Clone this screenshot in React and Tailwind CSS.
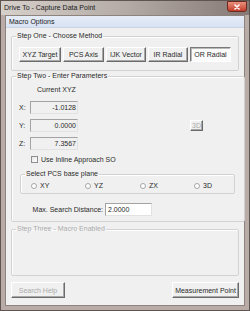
const font = { fontFamily: '"Liberation Sans", Arial, sans-serif' };

function Btn({ children, className = "", pressed, disabled }) {
  const base = pressed
    ? "border-t-[#7a7a7a] border-l-[#7a7a7a] border-r-white border-b-white bg-[#fbfbfb] shadow-[inset_1px_1px_0_#b8b8b8]"
    : "border-t-white border-l-white border-r-[#6b6b6b] border-b-[#6b6b6b] bg-[#f0f0f0] shadow-[inset_-1px_-1px_0_#a8a8a8]";
  return (
    <div
      className={`flex items-center justify-center border text-[7px] leading-none ${base} ${
        disabled ? "text-[#ababab]" : "text-[#2a2a2a]"
      } ${className}`}
    >
      {children}
    </div>
  );
}

function Field({ value, white, className = "" }) {
  return (
    <div
      className={`flex h-[13px] items-center border border-t-[#a3a3a3] border-l-[#a3a3a3] border-r-[#e2e2e2] border-b-[#e2e2e2] text-[7px] leading-none text-[#2a2a2a] ${
        white ? "bg-white pl-[2px]" : "justify-end bg-[#f0f0f0] pr-[1px]"
      } ${className}`}
    >
      {value}
    </div>
  );
}

function Group({ label, children, className = "", disabled }) {
  return (
    <fieldset className={`rounded-[2px] border border-[#d2d2d2] shadow-[inset_1px_1px_0_#ffffff] ${className}`}>
      <legend
        className={`ml-[4px] px-[1px] text-[7px] leading-[8px] ${disabled ? "text-[#ababab]" : "text-[#2a2a2a]"}`}
      >
        {label}
      </legend>
      {children}
    </fieldset>
  );
}

function Radio({ label }) {
  return (
    <div className="flex items-center gap-[3px]">
      <div className="h-[6px] w-[6px] rounded-full border border-[#a5a5a5] bg-white" />
      <span className="text-[7px] leading-none text-[#2a2a2a]">{label}</span>
    </div>
  );
}

export default function App() {
  return (
    <div
      className="flex h-[311px] w-[250px] flex-col border border-[#5e5450] bg-[#b9aca7] pb-[4px]"
      style={font}
    >
      <div className="flex h-[14px] items-start justify-between bg-gradient-to-r from-[#d6d0cb] via-[#b4aba6] to-[#857975] pl-[3px] pr-[2px]">
        <span className="mt-[3px] text-[7px] leading-none text-[#1a1a1a]">Drive To - Capture Data Point</span>
        <div className="flex h-[11px] w-[20px] items-center justify-center rounded-b-[3px] border border-[#6e2a20] bg-gradient-to-b from-[#e8907e] to-[#c23a28]">
          <svg width="6" height="6" viewBox="0 0 6 6">
            <path d="M1 1L5 5M5 1L1 5" stroke="white" strokeWidth="1.6" strokeLinecap="round" />
          </svg>
        </div>
      </div>
      <div className="mx-[4px] flex flex-1 flex-col border border-[#8d827d] bg-[#f0f0f0]">
        <div className="flex h-[12px] items-center border-b border-[#c9d4e4] bg-gradient-to-b from-[#e6edf8] to-[#d8e2f2] pl-[3px] text-[7px] leading-none text-[#1a1a1a]">
          Macro Options
        </div>
        <div className="flex flex-col px-[5px]">
          <Group label="Step One - Choose Method" className="mt-[4px]">
            <div className="flex gap-[2px] pb-[8px] pl-[7px] pt-[7px]">
              <Btn className="h-[15px] w-[42px]">XYZ Target</Btn>
              <Btn className="h-[15px] w-[41px]">PCS Axis</Btn>
              <Btn className="h-[15px] w-[40px]">IJK Vector</Btn>
              <Btn className="h-[15px] w-[40px]">IR Radial</Btn>
              <Btn className="h-[15px] w-[41px]" pressed>
                OR Radial
              </Btn>
            </div>
          </Group>
          <Group label="Step Two - Enter Parameters" className="mt-[1px]">
            <div className="flex flex-col pb-[5px]">
              <div className="mt-[6px] pl-[25px] text-[7px] leading-[8px] text-[#2a2a2a]">Current XYZ</div>
              <div className="mt-[7px] flex flex-col gap-[5px] pl-[7px]">
                <div className="flex items-center">
                  <span className="w-[11px] text-[7px] leading-none text-[#2a2a2a]">X:</span>
                  <Field value="-1.0128" className="w-[48px]" />
                </div>
                <div className="flex items-center">
                  <span className="w-[11px] text-[7px] leading-none text-[#2a2a2a]">Y:</span>
                  <Field value="0.0000" className="w-[48px]" />
                  <Btn className="ml-[112px] h-[11px] w-[13px]" disabled>
                    3D
                  </Btn>
                </div>
                <div className="flex items-center">
                  <span className="w-[11px] text-[7px] leading-none text-[#2a2a2a]">Z:</span>
                  <Field value="7.3567" className="w-[48px]" />
                </div>
              </div>
              <div className="mt-[6px] flex items-center gap-[3px] pl-[19px]">
                <div className="h-[7px] w-[7px] border border-[#8e8f8f] bg-gradient-to-br from-[#e6e6e6] to-white" />
                <span className="text-[7px] leading-none text-[#2a2a2a]">Use Inline Approach SO</span>
              </div>
              <Group label="Select PCS base plane" className="ml-[8px] mr-[9px] mt-[7px]">
                <div className="grid grid-cols-[54px_55px_54px_40px] pb-[4px] pl-[10px] pt-[4px]">
                  <Radio label="XY" />
                  <Radio label="YZ" />
                  <Radio label="ZX" />
                  <Radio label="3D" />
                </div>
              </Group>
              <div className="mt-[9px] flex items-center">
                <span className="w-[93px] pr-[2px] text-right text-[7px] leading-none text-[#2a2a2a]">
                  Max. Search Distance:
                </span>
                <Field value="2.0000" white className="w-[47px] items-start pt-[2px]" />
              </div>
            </div>
          </Group>
          <Group label="Step Three - Macro Enabled" className="mt-[3px]" disabled>
            <div className="h-[42px]" />
          </Group>
          <div className="mt-[6px] flex justify-between">
            <Btn className="h-[16px] w-[54px]" disabled>
              Search Help
            </Btn>
            <Btn className="h-[16px] w-[67px]">Measurement Point</Btn>
          </div>
        </div>
      </div>
    </div>
  );
}
